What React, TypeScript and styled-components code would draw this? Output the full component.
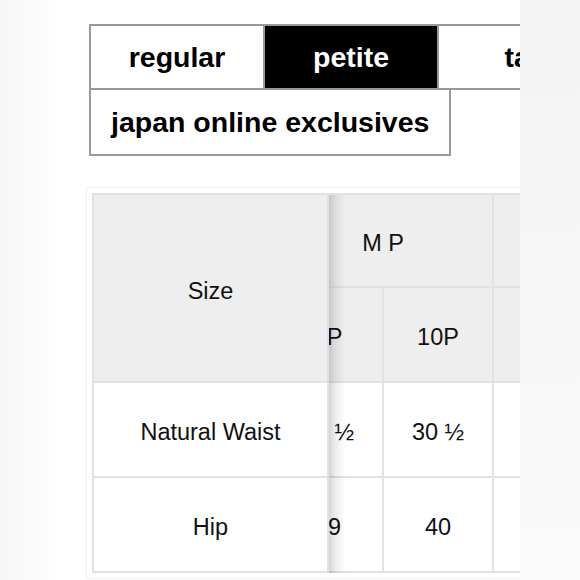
import React, { useLayoutEffect, useRef } from "react";
import styled, { createGlobalStyle } from "styled-components";

const Global = createGlobalStyle`
  html, body { margin: 0; padding: 0; background: #ffffff; }
  body { font-family: "Liberation Sans", Arial, Helvetica, sans-serif; color: #111; }
  * { box-sizing: border-box; }
`;

const Page = styled.div`
  display: flex;
  width: 580px;
  height: 580px;
  overflow: hidden;
`;

const Gutter = styled.div`
  width: 60px;
  flex: none;
  background: linear-gradient(to right, #f7f7f7, #fbfbfb 70%, #ffffff);
`;

const SidePanel = styled.div`
  flex: 1;
  background: linear-gradient(to bottom, #f3f3f3, #f6f6f6 40%, #fafafa);
`;

const Main = styled.main`
  width: 460px;
  flex: none;
  background: #ffffff;
  overflow: hidden;
  padding: 24px 0 0 26px;
`;

const TabBar = styled.div`
  display: flex;
  flex-wrap: wrap;
  width: 560px;
  margin-left: 3px;
`;

const Tab = styled.button<{ $active?: boolean; $auto?: boolean }>`
  height: ${(p) => (p.$auto ? "68px" : "66px")};
  width: ${(p) => (p.$auto ? "auto" : "176px")};
  padding: ${(p) => (p.$auto ? "0 20px" : "0")};
  margin: 0 -2px -2px 0;
  border: 2px solid #9a9a9a;
  background: ${(p) => (p.$active ? "#000" : "#fff")};
  color: ${(p) => (p.$active ? "#fff" : "#000")};
  font-family: "Liberation Sans", Arial, sans-serif;
  font-weight: 700;
  font-size: 28.5px;
  display: flex;
  align-items: center;
  justify-content: center;
  white-space: nowrap;
  cursor: pointer;
`;

const TableWrap = styled.div`
  margin-top: 33px;
  width: 600px;
  border: 1px solid #efefef;
  padding: 5px;
  background: #fff;
`;

const Scroller = styled.div`
  width: 588px;
  overflow: hidden;
`;

const Table = styled.table`
  table-layout: fixed;
  width: 897px;
  border-collapse: separate;
  border-spacing: 0;
  font-family: "Liberation Sans", Arial, sans-serif;
  font-size: 23.5px;
  color: #111;
`;

const Col = styled.col<{ $w: number }>`
  width: ${(p) => p.$w}px;
`;

const Cell = styled.td<{ $head?: boolean; $sticky?: boolean; $top?: boolean }>`
  height: 95px;
  padding: 6px 0 0;
  text-align: center;
  vertical-align: middle;
  font-weight: 400;
  background: ${(p) => (p.$head ? "#eeeeee" : "#ffffff")};
  border-right: 2px solid #e2e2e2;
  border-bottom: 2px solid #e2e2e2;
  border-top: ${(p) => (p.$top ? "2px solid #e2e2e2" : "none")};
  border-left: ${(p) => (p.$sticky ? "2px solid #e2e2e2" : "none")};
  position: ${(p) => (p.$sticky ? "sticky" : "static")};
  left: 0;
  z-index: ${(p) => (p.$sticky ? 2 : "auto")};
  white-space: nowrap;

  &::after {
    content: ${(p) => (p.$sticky ? "''" : "none")};
    position: absolute;
    top: 0;
    bottom: -2px;
    right: -18px;
    width: 16px;
    background: linear-gradient(
      to right,
      rgba(0, 0, 0, 0.16),
      rgba(0, 0, 0, 0.07) 40%,
      rgba(0, 0, 0, 0)
    );
    pointer-events: none;
  }
`;

const groups = [
  { label: "S P", sizes: ["4P", "6P"] },
  { label: "M P", sizes: ["8P", "10P"] },
  { label: "L P", sizes: ["12P", "14P"] },
];

const rows = [
  { name: "Natural Waist", values: ["27 ½", "28 ½", "29 ½", "30 ½", "32", "33 ½"] },
  { name: "Hip", values: ["37", "38", "39", "40", "41 ½", "43"] },
];

export default function App() {
  const scrollRef = useRef<HTMLDivElement>(null);

  useLayoutEffect(() => {
    if (scrollRef.current) scrollRef.current.scrollLeft = 275;
  }, []);

  return (
    <>
      <Global />
      <Page>
        <Gutter />
        <Main>
          <TabBar>
            <Tab>regular</Tab>
            <Tab $active>petite</Tab>
            <Tab>tall</Tab>
            <Tab $auto>japan online exclusives</Tab>
          </TabBar>
          <TableWrap>
            <Scroller ref={scrollRef}>
              <Table>
                <colgroup>
                  <Col $w={237} />
                  {groups.flatMap((g) => g.sizes).map((s) => (
                    <Col key={s} $w={110} />
                  ))}
                </colgroup>
                <thead>
                  <tr>
                    <Cell as="th" $head $sticky $top rowSpan={2}>
                      Size
                    </Cell>
                    {groups.map((g) => (
                      <Cell as="th" $head $top colSpan={2} key={g.label}>
                        {g.label}
                      </Cell>
                    ))}
                  </tr>
                  <tr>
                    {groups.flatMap((g) => g.sizes).map((s) => (
                      <Cell as="th" $head key={s}>
                        {s}
                      </Cell>
                    ))}
                  </tr>
                </thead>
                <tbody>
                  {rows.map((r) => (
                    <tr key={r.name}>
                      <Cell as="th" $sticky>
                        {r.name}
                      </Cell>
                      {r.values.map((v, i) => (
                        <Cell key={i}>{v}</Cell>
                      ))}
                    </tr>
                  ))}
                </tbody>
              </Table>
            </Scroller>
          </TableWrap>
        </Main>
        <SidePanel />
      </Page>
    </>
  );
}
